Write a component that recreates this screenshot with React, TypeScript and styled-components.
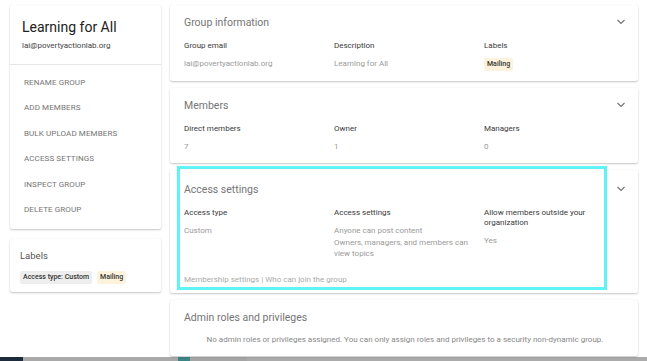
import React from 'react';
import styled, { createGlobalStyle } from 'styled-components';

const GlobalStyle = createGlobalStyle`
  html, body {
    margin: 0;
    padding: 0;
    background: #fff;
    font-family: Roboto, 'Liberation Sans', sans-serif;
  }
`;

const menuItems = ['Rename group', 'Add members', 'Bulk upload members', 'Access settings', 'Inspect group', 'Delete group'];

function Chevron() {
  return (
    <ChevronIcon width="10" height="6" viewBox="0 0 10 6">
      <polyline points="1.5,1 5,4.5 8.5,1" fill="none" stroke="#757575" strokeWidth="1.2" />
    </ChevronIcon>
  );
}

type Field = { label: string; values: string[]; chip?: boolean };

function FieldGrid({ fields }: { fields: Field[] }) {
  return (
    <Columns>
      {fields.map((f) => (
        <Column key={f.label}>
          <FieldLabel>{f.label}</FieldLabel>
          {f.chip ? (
            <Chip $tone="yellow">{f.values[0]}</Chip>
          ) : (
            f.values.map((v) => <FieldValue key={v}>{v}</FieldValue>)
          )}
        </Column>
      ))}
    </Columns>
  );
}

export default function App(): JSX.Element {
  return (
    <Page>
      <GlobalStyle />
      <Main>
        <Sidebar>
          <Card>
            <GroupHeader>
              <GroupName>Learning for All</GroupName>
              <GroupEmail>lai@povertyactionlab.org</GroupEmail>
            </GroupHeader>
            <Menu>
              {menuItems.map((m) => (
                <MenuItem key={m}>{m}</MenuItem>
              ))}
            </Menu>
          </Card>
          <LabelsCard>
            <LabelsTitle>Labels</LabelsTitle>
            <ChipRow>
              <Chip $tone="grey">Access type: Custom</Chip>
              <Chip $tone="yellow">Mailing</Chip>
            </ChipRow>
          </LabelsCard>
        </Sidebar>

        <Content>
          <Panel $height={76}>
            <PanelHeader>
              <PanelTitle>Group information</PanelTitle>
              <Chevron />
            </PanelHeader>
            <FieldGrid
              fields={[
                { label: 'Group email', values: ['lai@povertyactionlab.org'] },
                { label: 'Description', values: ['Learning for All'] },
                { label: 'Labels', values: ['Mailing'], chip: true },
              ]}
            />
          </Panel>

          <Panel $height={75}>
            <PanelHeader>
              <PanelTitle>Members</PanelTitle>
              <Chevron />
            </PanelHeader>
            <FieldGrid
              fields={[
                { label: 'Direct members', values: ['7'] },
                { label: 'Owner', values: ['1'] },
                { label: 'Managers', values: ['0'] },
              ]}
            />
          </Panel>

          <Panel $height={123}>
            <Highlight />
            <PanelHeader $top={12}>
              <PanelTitle>Access settings</PanelTitle>
              <Chevron />
            </PanelHeader>
            <FieldGrid
              fields={[
                { label: 'Access type', values: ['Custom'] },
                { label: 'Access settings', values: ['Anyone can post content', 'Owners, managers, and members can view topics'] },
                { label: 'Allow members outside your organization', values: ['Yes'] },
              ]}
            />
            <FootLink>Membership settings | Who can join the group</FootLink>
          </Panel>

          <Panel $height={56}>
            <PanelHeader>
              <PanelTitle>Admin roles and privileges</PanelTitle>
            </PanelHeader>
            <Notice>
              No admin roles or privileges assigned. You can only assign roles and privileges to a security non-dynamic group.
            </Notice>
          </Panel>
        </Content>
      </Main>
      <Taskbar>
        <TaskSegment $color="#1d2b3a" $width={23} />
        <TaskSegment $color="#a9a9a9" $width={155} />
        <TaskSegment $color="#3b8585" $width={12} />
        <TaskSegment $color="#a5a5a5" $width={57} />
        <TaskSegment $color="#ababab" $grow />
      </Taskbar>
    </Page>
  );
}

const Page = styled.div`
  height: 361px;
  display: flex;
  flex-direction: column;
  overflow: hidden;
`;

const Main = styled.div`
  flex: 1;
  display: flex;
  gap: 9px;
  padding: 5px 9px 0 10px;
  min-height: 0;
`;

const Sidebar = styled.div`
  width: 151px;
  display: flex;
  flex-direction: column;
  gap: 10px;
`;

const Card = styled.div`
  background: #fff;
  border-radius: 2px;
  box-shadow: 0 1px 2px rgba(0, 0, 0, 0.22), 0 0 1px rgba(0, 0, 0, 0.08);
`;

const GroupHeader = styled.div`
  padding: 13px 12px 14px;
  border-bottom: 1px solid #e6e6e6;
`;

const GroupName = styled.div`
  font-size: 14px;
  color: #212121;
  line-height: 19px;
`;

const GroupEmail = styled.div`
  font-size: 8px;
  color: #444;
  margin-top: 4px;
`;

const Menu = styled.div`
  display: flex;
  flex-direction: column;
  padding: 5px 0 7px;
`;

const MenuItem = styled.div`
  font-size: 8px;
  line-height: 25.4px;
  color: #757575;
  text-transform: uppercase;
  padding-left: 14px;
  letter-spacing: 0.1px;
`;

const LabelsCard = styled(Card)`
  height: 53px;
  box-sizing: border-box;
  padding: 11px 10px 0;
`;

const LabelsTitle = styled.div`
  font-size: 9.5px;
  color: #555;
`;

const ChipRow = styled.div`
  display: flex;
  gap: 5px;
  margin-top: 10px;
`;

const Chip = styled.span<{ $tone: 'grey' | 'yellow' }>`
  display: inline-block;
  font-size: 7px;
  font-weight: 500;
  color: #333;
  padding: 2px 3px;
  border-radius: 2px;
  line-height: 9px;
  background: ${(p) => (p.$tone === 'yellow' ? '#fdf3dc' : '#eeeeee')};
  align-self: flex-start;
`;

const Content = styled.div`
  flex: 1;
  display: flex;
  flex-direction: column;
  gap: 7px;
`;

const Panel = styled(Card)<{ $height: number }>`
  position: relative;
  height: ${(p) => p.$height}px;
  box-sizing: border-box;
  padding: 0 12px 0 14px;
  flex-shrink: 0;
`;

const PanelHeader = styled.div<{ $top?: number }>`
  display: flex;
  align-items: center;
  justify-content: space-between;
  padding-top: ${(p) => p.$top ?? 10}px;
  height: 14px;
`;

const PanelTitle = styled.div`
  font-size: 10.5px;
  color: #757575;
`;

const ChevronIcon = styled.svg`
  display: block;
`;

const Columns = styled.div`
  display: grid;
  grid-template-columns: 150px 150px 130px;
  margin-top: 12px;
`;

const Column = styled.div`
  display: flex;
  flex-direction: column;
`;

const FieldLabel = styled.div`
  font-size: 8px;
  line-height: 10px;
  color: #3a3a3a;
  margin-bottom: 7px;
`;

const FieldValue = styled.div`
  font-size: 8px;
  line-height: 11.5px;
  color: #9a9a9a;
  padding-right: 14px;
`;

const FootLink = styled.div`
  position: absolute;
  left: 14px;
  top: 105px;
  font-size: 8px;
  color: #aaa;
`;

const Highlight = styled.div`
  position: absolute;
  left: 7px;
  top: -4px;
  width: 430px;
  height: 124px;
  box-sizing: border-box;
  border: 3px solid #5ef4f6;
  pointer-events: none;
`;

const Notice = styled.div`
  text-align: center;
  font-size: 8px;
  color: #888;
  margin-top: 11px;
`;

const Taskbar = styled.div`
  height: 4px;
  display: flex;
`;

const TaskSegment = styled.div<{ $color: string; $width?: number; $grow?: boolean }>`
  background: ${(p) => p.$color};
  width: ${(p) => (p.$width ? `${p.$width}px` : 'auto')};
  flex: ${(p) => (p.$grow ? 1 : 'none')};
`;
